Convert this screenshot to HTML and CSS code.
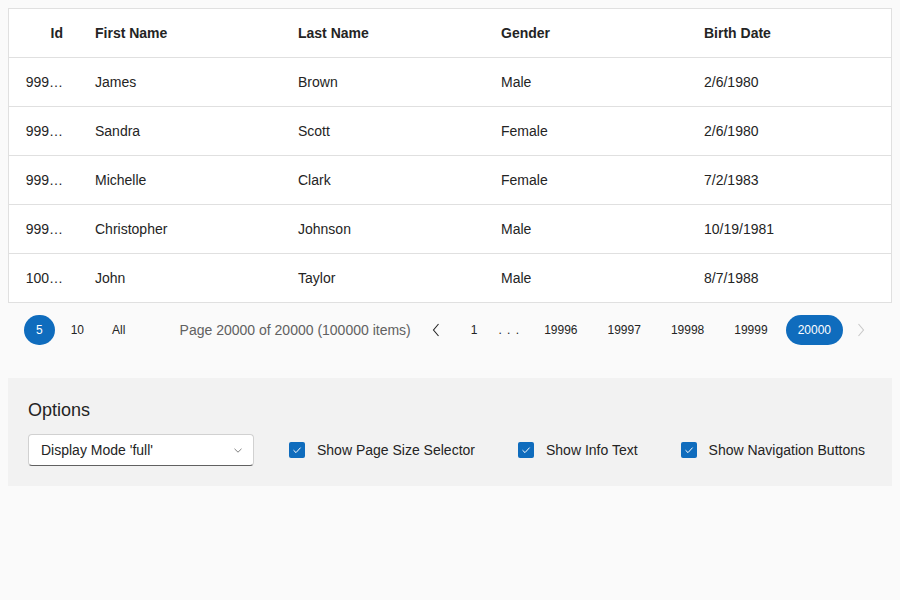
FILE: index.html
```html
<!DOCTYPE html>
<html>
<head>
<meta charset="utf-8">
<link rel="stylesheet" href="styles.css">
</head>
<body>
<div class="grid">
  <table class="data">
    <colgroup>
      <col class="c-id"><col class="c-w"><col class="c-w"><col class="c-w"><col>
    </colgroup>
    <thead>
      <tr><th class="num">Id</th><th>First Name</th><th>Last Name</th><th>Gender</th><th>Birth Date</th></tr>
    </thead>
    <tbody>
      <tr><td class="num">999…</td><td>James</td><td>Brown</td><td>Male</td><td>2/6/1980</td></tr>
      <tr><td class="num">999…</td><td>Sandra</td><td>Scott</td><td>Female</td><td>2/6/1980</td></tr>
      <tr><td class="num">999…</td><td>Michelle</td><td>Clark</td><td>Female</td><td>7/2/1983</td></tr>
      <tr><td class="num">999…</td><td>Christopher</td><td>Johnson</td><td>Male</td><td>10/19/1981</td></tr>
      <tr><td class="num">100…</td><td>John</td><td>Taylor</td><td>Male</td><td>8/7/1988</td></tr>
    </tbody>
  </table>
  <div class="pager">
    <div class="sizes">
      <span class="pbtn sel">5</span>
      <span class="pbtn">10</span>
      <span class="pbtn">All</span>
    </div>
    <div class="pages">
      <span class="info">Page 20000 of 20000 (100000 items)</span>
      <span class="nav prev"><svg width="10" height="16" viewBox="0 0 10 16"><path d="M7.5 2 L2.5 8 L7.5 14" fill="none" stroke="#242424" stroke-width="1.1"/></svg></span>
      <span class="pg first">1</span>
      <span class="dots">. . .</span>
      <span class="pg">19996</span>
      <span class="pg">19997</span>
      <span class="pg">19998</span>
      <span class="pg">19999</span>
      <span class="pg sel">20000</span>
      <span class="nav next"><svg width="10" height="16" viewBox="0 0 10 16"><path d="M2.5 2 L7.5 8 L2.5 14" fill="none" stroke="#c8c8c8" stroke-width="1.1"/></svg></span>
    </div>
  </div>
</div>
<div class="options">
  <div class="title">Options</div>
  <div class="row">
    <div class="select"><span>Display Mode 'full'</span><svg width="8" height="5" viewBox="0 0 8 5"><path d="M0.5 0.8 L4 4.2 L7.5 0.8" fill="none" stroke="#707070" stroke-width="0.9"/></svg></div>
    <label class="cb"><span class="box"><svg width="12" height="12" viewBox="0 0 12 12"><path d="M2.5 6.2 L5 8.6 L9.6 3.6" fill="none" stroke="#fff" stroke-width="1"/></svg></span>Show Page Size Selector</label>
    <label class="cb"><span class="box"><svg width="12" height="12" viewBox="0 0 12 12"><path d="M2.5 6.2 L5 8.6 L9.6 3.6" fill="none" stroke="#fff" stroke-width="1"/></svg></span>Show Info Text</label>
    <label class="cb"><span class="box"><svg width="12" height="12" viewBox="0 0 12 12"><path d="M2.5 6.2 L5 8.6 L9.6 3.6" fill="none" stroke="#fff" stroke-width="1"/></svg></span>Show Navigation Buttons</label>
  </div>
</div>
</body>
</html>
```
FILE: styles.css
```css
html, body { margin: 0; padding: 0; }
body {
  background: #fafafa;
  padding: 8px;
  font-family: "Liberation Sans", Arial, sans-serif;
  font-size: 14px;
  color: #242424;
}
.grid { width: 884px; }
.data {
  width: 884px;
  border-collapse: separate;
  border-spacing: 0;
  table-layout: fixed;
  background: #fff;
  border: 1px solid #e0e0e0;
}
.c-id { width: 70px; }
.c-w { width: 203px; }
.data th, .data td {
  text-align: left;
  padding: 0 16px;
  height: 48px;
  border-bottom: 1px solid #e0e0e0;
  white-space: nowrap;
  overflow: hidden;
}
.data th { font-weight: bold; }
.data .num { text-align: right; }
.data tbody tr:last-child td { border-bottom: none; }
.pager {
  display: flex;
  justify-content: space-between;
  align-items: center;
  padding: 12px 16px 12px 16px;
}
.sizes { display: flex; gap: 4px; align-items: center; }
.pbtn {
  height: 30px;
  line-height: 30px;
  padding: 0 12px;
  border-radius: 15px;
  font-size: 12px;
}
.pbtn.sel, .pg.sel { background: #0f6cbd; color: #fff; }
.pages { display: flex; align-items: center; }
.info { color: #616161; font-size: 14px; margin-right: 10px; }
.nav { width: 30px; height: 30px; display: flex; align-items: center; justify-content: center; }
.prev { margin-right: 8px; }
.next { margin-left: 3px; }
.pg {
  height: 30px;
  line-height: 30px;
  padding: 0 12px;
  border-radius: 15px;
  font-size: 12px;
  margin-right: 6px;
}
.pg.first { margin-right: 9px; }
.pg.sel { margin-right: 0; }
.dots { font-size: 12px; margin-right: 12px; letter-spacing: 1px; }
.options {
  margin-top: 21px;
  width: 844px;
  background: #f2f2f2;
  padding: 20px;
}
.title { font-size: 18px; line-height: 24px; margin-bottom: 12px; }
.row { display: flex; align-items: center; }
.select {
  width: 226px;
  height: 32px;
  box-sizing: border-box;
  background: #fff;
  border: 1px solid #d1d1d1;
  border-bottom-color: #616161;
  border-radius: 4px;
  display: flex;
  align-items: center;
  justify-content: space-between;
  padding: 0 11px 0 12px;
  margin-right: 35px;
}
.cb { display: flex; align-items: center; margin-right: 43px; }
.cb:last-child { margin-right: 0; }
.box {
  width: 16px;
  height: 16px;
  border-radius: 2px;
  background: #0f6cbd;
  display: flex;
  align-items: center;
  justify-content: center;
  margin-right: 12px;
}
```
